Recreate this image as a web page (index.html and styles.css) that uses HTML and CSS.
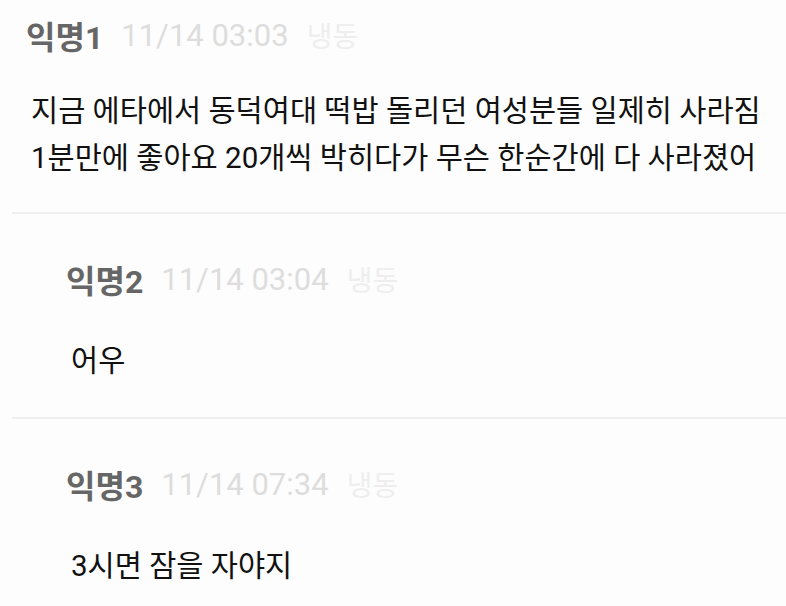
FILE: index.html
```html
<!DOCTYPE html>
<html lang="ko">
<head>
  <meta charset="UTF-8" />
  <meta name="viewport" content="width=device-width, initial-scale=1.0" />
  <title>댓글</title>
  <link rel="stylesheet" href="styles.css">
</head>
<body>
  <div class="comments">
    <div class="comment first">
      <div class="meta">
        <span class="name">익명1</span>
        <span class="date">11/14 03:03</span>
        <span class="freeze">냉동</span>
      </div>
      <p class="text">지금 에타에서 동덕여대 떡밥 돌리던 여성분들 일제히 사라짐<br>1분만에 좋아요 20개씩 박히다가 무슨 한순간에 다 사라졌어</p>
    </div>

    <div class="comment reply">
      <div class="meta">
        <span class="name">익명2</span>
        <span class="date">11/14 03:04</span>
        <span class="freeze">냉동</span>
      </div>
      <p class="text">어우</p>
    </div>

    <div class="comment reply">
      <div class="meta">
        <span class="name">익명3</span>
        <span class="date">11/14 07:34</span>
        <span class="freeze">냉동</span>
      </div>
      <p class="text">3시면 잠을 자야지</p>
    </div>
  </div>
</body>
</html>
```

FILE: styles.css
```css
body {
  margin: 0;
  background-color: #fdfdfd;
  font-family: Roboto, "Noto Sans CJK KR", sans-serif;
  color: #111;
}

.comment {
  padding: 45px 0 32px;
  border-top: 2px solid #eeeeee;
  margin-left: 12px;
}

.comment.first {
  padding: 15px 0 30px;
  border-top: none;
}

.meta {
  display: flex;
  align-items: center;
  gap: 18px;
  height: 40px;
  padding-left: 14px;
}

.reply .meta {
  padding-left: 54px;
}

.name {
  font-size: 32px;
  font-weight: bold;
  color: #666;
}

.date {
  font-size: 31px;
  color: #dddddd;
}

.freeze {
  font-size: 28px;
  color: #eeeeee;
}

.text {
  margin: 33px 0 0;
  padding-left: 19px;
  font-size: 29.5px;
  line-height: 47px;
}

.reply .text {
  margin-top: 39px;
  padding-left: 59px;
}
```
